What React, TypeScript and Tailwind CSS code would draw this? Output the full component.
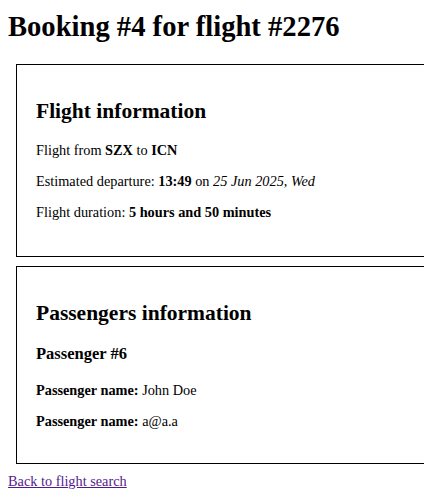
import React from 'react';

interface Passenger {
  id: number;
  name: string;
  email: string;
}

const booking = {
  id: 4,
  flightId: 2276,
  from: 'SZX',
  to: 'ICN',
  time: '13:49',
  date: '25 Jun 2025, Wed',
  duration: '5 hours and 50 minutes',
};

const passengers: Passenger[] = [{ id: 6, name: 'John Doe', email: 'a@a.a' }];

const Box: React.FC<{ className?: string; children: React.ReactNode }> = ({ className, children }) => (
  <section className={`ml-2 w-[430px] border border-black pl-[19px] pt-[34px] ${className ?? ''}`}>
    {children}
  </section>
);

const App: React.FC = () => {
  return (
    <div className="min-h-screen w-[424px] overflow-hidden bg-white pl-2 pt-[10px] font-['Liberation_Serif',serif] text-[14.3px] leading-[17px] text-black">
      <h1 className="mb-[21px] text-[28.6px] font-bold leading-[33px]">
        Booking #{booking.id} for flight #{booking.flightId}
      </h1>

      <Box className="pb-[35px]">
        <h2 className="text-[21.5px] font-bold leading-[25px]">Flight information</h2>
        <p className="mt-[18px]">
          Flight from <b>{booking.from}</b> to <b>{booking.to}</b>
        </p>
        <p className="mt-[14px]">
          Estimated departure: <b>{booking.time}</b> on <i>{booking.date}</i>
        </p>
        <p className="mt-[14px]">
          Flight duration: <b>{booking.duration}</b>
        </p>
      </Box>

      <Box className="mt-[9px] pb-[33px]">
        <h2 className="text-[21.5px] font-bold leading-[25px]">Passengers information</h2>
        {passengers.map((p) => (
          <div key={p.id}>
            <h3 className="mt-[18px] text-[16.5px] font-bold leading-[19px]">Passenger #{p.id}</h3>
            <p className="mt-[19px]">
              <b>Passenger name:</b> {p.name}
            </p>
            <p className="mt-[14px]">
              <b>Passenger name:</b> {p.email}
            </p>
          </div>
        ))}
      </Box>

      <a href="#" className="mt-[9px] inline-block text-[#551a8b] underline">
        Back to flight search
      </a>
    </div>
  );
};

export default App;
